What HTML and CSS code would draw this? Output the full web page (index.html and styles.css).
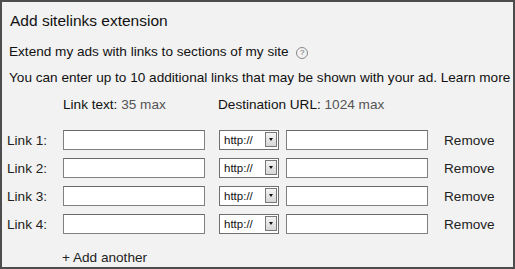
FILE: index.html
```html
<!DOCTYPE html>
<html lang="en">
<head>
    <meta charset="UTF-8">
    <title>Add sitelinks extension</title>
    <link rel="stylesheet" href="styles.css">
</head>
<body>

    <div class="panel">
        <h2>Add sitelinks extension</h2>

        <p class="extend">Extend my ads with links to sections of my site <span class="help">?</span></p>

        <p class="intro">You can enter up to 10 additional links that may be shown with your ad. <a href="#">Learn more</a></p>

        <div class="links">
            <span></span>
            <span class="col-head">Link text: <em>35 max</em></span>
            <span class="col-head url-head">Destination URL: <em>1024 max</em></span>
            <span></span>
            <span></span>

            <label>Link 1:</label>
            <input type="text" class="text-in">
            <div class="proto"><select><option>http://</option></select><span class="arrow"></span></div>
            <input type="text" class="url-in">
            <a href="#" class="remove">Remove</a>

            <label>Link 2:</label>
            <input type="text" class="text-in">
            <div class="proto"><select><option>http://</option></select><span class="arrow"></span></div>
            <input type="text" class="url-in">
            <a href="#" class="remove">Remove</a>

            <label>Link 3:</label>
            <input type="text" class="text-in">
            <div class="proto"><select><option>http://</option></select><span class="arrow"></span></div>
            <input type="text" class="url-in">
            <a href="#" class="remove">Remove</a>

            <label>Link 4:</label>
            <input type="text" class="text-in">
            <div class="proto"><select><option>http://</option></select><span class="arrow"></span></div>
            <input type="text" class="url-in">
            <a href="#" class="remove">Remove</a>
        </div>

        <a href="#" class="add">+ Add another</a>
    </div>

</body>
</html>
```

FILE: styles.css
```css
body {
    font-family: Arial, "Liberation Sans", sans-serif;
    color: #111;
    margin: 0;
    padding: 0;
    background: #fff;
}

.panel {
    width: 515px;
    height: 269px;
    box-sizing: border-box;
    background: #f2f2f2;
    border: 2px solid #4d4d4d;
    padding: 10px 0 0 5px;
    font-size: 13.6px;
}

h2 {
    font-size: 15.5px;
    font-weight: normal;
    margin: 0 0 0 3px;
    line-height: 18px;
}

.extend {
    margin: 14px 0 0 2px;
    line-height: 16px;
}

.help {
    display: inline-block;
    width: 10px;
    height: 10px;
    border: 1px solid #888;
    border-radius: 50%;
    font-size: 8px;
    line-height: 10px;
    text-align: center;
    color: #666;
    margin-left: 4px;
    vertical-align: 1px;
}

.intro {
    margin: 10px 0 0 2px;
    line-height: 16px;
}

.intro a {
    color: #111;
    text-decoration: none;
}

.links {
    display: grid;
    grid-template-columns: 56px 156px 67px 158px auto;
    grid-template-rows: 34px;
    grid-auto-rows: 28px;
    align-items: center;
    margin-top: 6px;
}

.col-head {
    white-space: nowrap;
    align-self: start;
    padding-top: 5px;
}

.url-head {
    margin-left: -1px;
}

.col-head em {
    font-style: normal;
    color: #555;
}

.links label {
    color: #222;
}

.links input {
    height: 20px;
    box-sizing: border-box;
    border: 1px solid #808080;
    border-top-color: #6a6a6a;
    background: #fff;
    margin: 0;
    padding: 0 3px;
}

.text-in {
    width: 142px;
}

.url-in {
    width: 142px;
}

.proto {
    position: relative;
    width: 60px;
    height: 20px;
}

.proto select {
    appearance: none;
    -webkit-appearance: none;
    width: 60px;
    height: 20px;
    box-sizing: border-box;
    border: 1px solid #707070;
    border-radius: 0;
    background: #fff;
    font-family: Arial, "Liberation Sans", sans-serif;
    font-size: 11.5px;
    color: #111;
    padding: 0 0 0 4px;
    margin: 0;
}

.arrow {
    position: absolute;
    right: 2px;
    top: 2px;
    width: 12px;
    height: 15px;
    border: 1px solid #777;
    box-sizing: border-box;
    background: linear-gradient(#f4f4f4, #d6d6d6);
}

.arrow::after {
    content: "";
    position: absolute;
    left: 3px;
    top: 5px;
    border-left: 2px solid transparent;
    border-right: 2px solid transparent;
    border-top: 3px solid #111;
}

.remove {
    color: #222;
    text-decoration: none;
    white-space: nowrap;
}

.add {
    display: inline-block;
    margin: 12px 0 0 55px;
    color: #222;
    text-decoration: none;
}
```
